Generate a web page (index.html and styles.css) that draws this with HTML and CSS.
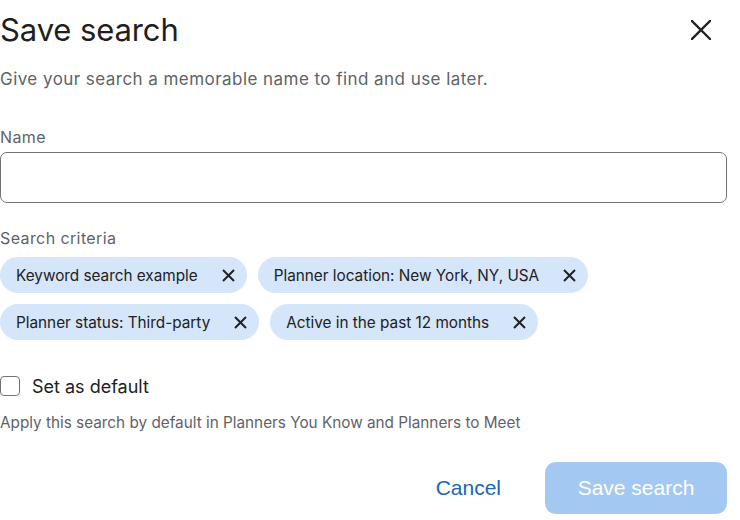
FILE: index.html
```html
<!DOCTYPE html>
<html lang="en">
<head>
<meta charset="utf-8">
<title>Save search</title>
<link rel="stylesheet" href="styles.css">
</head>
<body>
<div class="dialog">
  <div class="header">
    <h1 class="title">Save search</h1>
    <button class="close" aria-label="Close">
      <svg width="20" height="20" viewBox="0 0 20 20"><path d="M1 1 L19 19 M19 1 L1 19" stroke="#202124" stroke-width="2.4" stroke-linecap="square" fill="none"/></svg>
    </button>
  </div>
  <p class="subtitle">Give your search a memorable name to find and use later.</p>

  <label class="label name-label" for="name">Name</label>
  <input class="input" id="name" type="text">

  <div class="label criteria-label">Search criteria</div>
  <div class="chips">
    <span class="chip">Keyword search example<svg class="chip-x" width="13" height="13" viewBox="0 0 13 13"><path d="M1 1 L12 12 M12 1 L1 12" stroke="#202124" stroke-width="2" fill="none"/></svg></span>
    <span class="chip">Planner location: New York, NY, USA<svg class="chip-x" width="13" height="13" viewBox="0 0 13 13"><path d="M1 1 L12 12 M12 1 L1 12" stroke="#202124" stroke-width="2" fill="none"/></svg></span>
    <span class="chip">Planner status: Third-party<svg class="chip-x" width="13" height="13" viewBox="0 0 13 13"><path d="M1 1 L12 12 M12 1 L1 12" stroke="#202124" stroke-width="2" fill="none"/></svg></span>
    <span class="chip">Active in the past 12 months<svg class="chip-x" width="13" height="13" viewBox="0 0 13 13"><path d="M1 1 L12 12 M12 1 L1 12" stroke="#202124" stroke-width="2" fill="none"/></svg></span>
  </div>

  <label class="check-row">
    <span class="checkbox"></span>
    <span class="check-label">Set as default</span>
  </label>
  <p class="helper">Apply this search by default in Planners You Know and Planners to Meet</p>

  <div class="actions">
    <button class="btn-cancel">Cancel</button>
    <button class="btn-save">Save search</button>
  </div>
</div>
</body>
</html>
```
FILE: styles.css
```css
* { box-sizing: border-box; }
html, body { margin: 0; padding: 0; background: #ffffff; }
body { font-family: Inter, "Noto Sans", sans-serif; color: #202124; }
.dialog { width: 727px; }
.header { display: flex; justify-content: space-between; align-items: center; height: 40px; margin-top: 10px; }
.title { margin: 0; font-size: 31px; font-weight: 400; line-height: 40px; color: #1f1f1f; letter-spacing: -0.1px; }
.close { border: 0; background: none; padding: 0; width: 20px; height: 20px; margin-right: 16px; display: flex; }
.subtitle { margin: 17px 0 0; font-size: 17px; line-height: 24px; color: #5f6368; letter-spacing: 0.45px; }
.label { display: block; font-size: 16px; line-height: 20px; color: #5f6368; letter-spacing: 0.4px; }
.name-label { margin-top: 36px; }
.input { display: block; width: 727px; height: 51px; margin-top: 5px; border: 1.5px solid #6f7277; border-radius: 7px; font: inherit; outline: none; }
.criteria-label { margin-top: 25px; }
.chips { display: flex; flex-wrap: wrap; gap: 11px; margin-top: 9px; }
.chip { display: inline-flex; align-items: center; height: 36px; padding: 0 12px 0 16px; background: #d5e5fa; border-radius: 18px; font-size: 15.3px; color: #202124; white-space: nowrap; }
.chip-x { margin-left: 24px; }
.check-row { display: flex; align-items: center; margin-top: 36px; height: 20px; }
.checkbox { width: 20px; height: 20px; border: 1.5px solid #6f7378; border-radius: 4px; }
.check-label { margin-left: 12px; font-size: 18px; color: #202124; }
.helper { margin: 17px 0 0; font-size: 15.3px; line-height: 20px; color: #5f6368; }
.actions { display: flex; justify-content: flex-end; align-items: center; margin-top: 29px; }
.btn-cancel { border: 0; background: none; font-family: "Liberation Sans", Arial, sans-serif; font-size: 21px; color: #1b66b5; padding: 0 20px; height: 52px; margin-right: 24px; }
.btn-save { border: 0; width: 182px; height: 52px; border-radius: 11px; background: #a3c8f2; color: #ffffff; font-family: "Liberation Sans", Arial, sans-serif; font-size: 21px; }
```
